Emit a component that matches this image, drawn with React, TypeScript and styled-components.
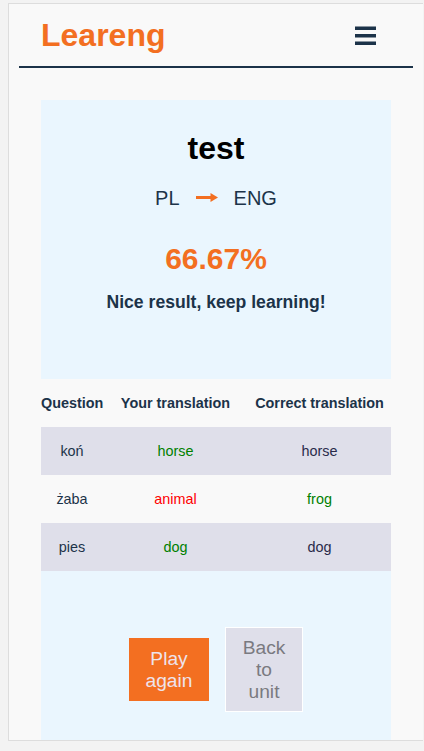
import React from "react";
import styled, { createGlobalStyle } from "styled-components";

const Global = createGlobalStyle`
  html, body { margin: 0; padding: 0; background: #f3f3f3; }
  body { font-family: "Liberation Sans", Arial, sans-serif; }
  * { box-sizing: border-box; }
`;

const Frame = styled.div`
  margin: 3px 0 0 8px;
  width: 415px;
  height: 738px;
  border: 1px solid #dddddd;
  border-right: none;
  background: #f9f9f9;
  overflow: hidden;
`;

const Header = styled.header`
  margin: 0 10px;
  height: 64px;
  display: flex;
  align-items: center;
  justify-content: space-between;
  padding: 0 37px 0 22px;
  border-bottom: 2px solid #1c3349;
`;

const Logo = styled.div`
  font-size: 32px;
  font-weight: 700;
  color: #f36f21;
  margin-top: 1px;
`;

const MenuButton = styled.button`
  border: none;
  background: none;
  padding: 0;
  display: flex;
  margin-top: 1px;
`;

const Card = styled.main`
  margin: 32px 32px 0 32px;
  background: #eaf6fe;
  padding-bottom: 60px;
`;

const Summary = styled.section`
  display: flex;
  flex-direction: column;
  align-items: center;
  padding: 30px 0 66px;
  color: #1c3349;
`;

const Title = styled.h1`
  margin: 0;
  font-size: 32px;
  font-weight: 700;
  color: #000;
`;

const Langs = styled.div`
  margin-top: 20px;
  display: flex;
  align-items: center;
  gap: 16px;
  font-size: 20px;
  color: #1c3349;
`;

const Score = styled.div`
  margin-top: 32px;
  font-size: 30px;
  font-weight: 700;
  color: #f36f21;
`;

const Message = styled.p`
  margin: 16px 0 0;
  font-size: 17.6px;
  font-weight: 700;
  color: #1c3349;
`;

const Table = styled.div`
  display: flex;
  flex-direction: column;
`;

const Row = styled.div<{ $bg: string }>`
  display: grid;
  grid-template-columns: 62px 145px 1fr;
  height: 48px;
  align-items: center;
  text-align: center;
  background: ${(p) => p.$bg};
  font-size: 14.4px;
`;

const Th = styled.div`
  font-weight: 700;
  color: #1c3349;
  white-space: nowrap;
`;

const Td = styled.div<{ $color: string }>`
  color: ${(p) => p.$color};
`;

const Actions = styled.div`
  display: flex;
  justify-content: center;
  align-items: center;
  gap: 16px;
  padding-top: 56px;
`;

const PlayButton = styled.button`
  width: 80px;
  padding: 9.5px 14px;
  border: none;
  background: #f36f21;
  color: #eee3ec;
  font-family: "Liberation Sans", Arial, sans-serif;
  font-size: 19.2px;
  line-height: 22px;
`;

const BackButton = styled.button`
  width: 78px;
  padding: 8.5px 13px;
  border: 1px solid #ffffff;
  background: #dfdfea;
  color: #7a7a80;
  font-family: "Liberation Sans", Arial, sans-serif;
  font-size: 19.2px;
  line-height: 22px;
`;

const GREEN = "#008000";
const RED = "#ff0000";
const NAVY = "#1c3349";

const rows = [
  { q: "koń", your: "horse", yourColor: GREEN, correct: "horse", correctColor: "#2a2b4a" },
  { q: "żaba", your: "animal", yourColor: RED, correct: "frog", correctColor: GREEN },
  { q: "pies", your: "dog", yourColor: GREEN, correct: "dog", correctColor: "#2a2b4a" },
];

const Bars = () => (
  <svg width="21" height="19" viewBox="0 0 21 19">
    <rect x="0" y="0.5" width="21" height="3.5" fill="#1c3349" />
    <rect x="0" y="8" width="21" height="3.5" fill="#1c3349" />
    <rect x="0" y="15.5" width="21" height="3.5" fill="#1c3349" />
  </svg>
);

const Arrow = () => (
  <svg width="22" height="9" viewBox="0 0 22 9" style={{ marginTop: -3 }}>
    <rect x="0" y="3" width="16" height="3" fill="#f36f21" />
    <path d="M14.5 0 L22 4.5 L14.5 9 Z" fill="#f36f21" />
  </svg>
);

export default function App() {
  return (
    <>
      <Global />
      <Frame>
        <Header>
          <Logo>Leareng</Logo>
          <MenuButton aria-label="menu">
            <Bars />
          </MenuButton>
        </Header>
        <Card>
          <Summary>
            <Title>test</Title>
            <Langs>
              <span>PL</span>
              <Arrow />
              <span>ENG</span>
            </Langs>
            <Score>66.67%</Score>
            <Message>Nice result, keep learning!</Message>
          </Summary>
          <Table>
            <Row $bg="#f9f9f9">
              <Th>Question</Th>
              <Th>Your translation</Th>
              <Th>Correct translation</Th>
            </Row>
            {rows.map((r, i) => (
              <Row key={r.q} $bg={i % 2 === 0 ? "#dfdfea" : "#f9f9f9"}>
                <Td $color={NAVY}>{r.q}</Td>
                <Td $color={r.yourColor}>{r.your}</Td>
                <Td $color={r.correctColor}>{r.correct}</Td>
              </Row>
            ))}
          </Table>
          <Actions>
            <PlayButton>Play again</PlayButton>
            <BackButton>Back to unit</BackButton>
          </Actions>
        </Card>
      </Frame>
    </>
  );
}
